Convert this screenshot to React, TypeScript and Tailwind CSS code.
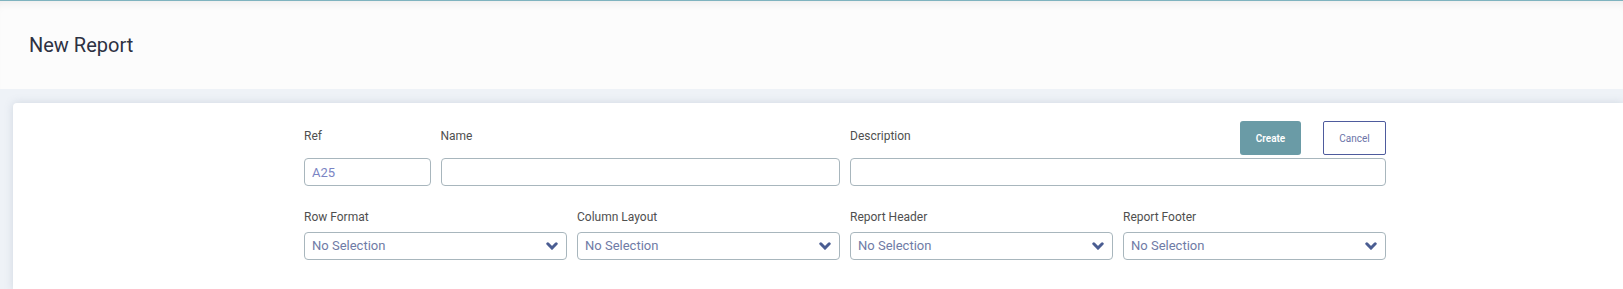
import React from 'react';

const selects = ['Row Format', 'Column Layout', 'Report Header', 'Report Footer'];

function Chevron() {
  return (
    <svg width="12" height="8" viewBox="0 0 12 8" className="text-[#4a5d92]">
      <polyline
        points="1.8,1.8 6,6 10.2,1.8"
        fill="none"
        stroke="currentColor"
        strokeWidth="3"
        strokeLinecap="round"
        strokeLinejoin="miter"
      />
    </svg>
  );
}

function SelectField({ label }: { label: string }) {
  return (
    <div className="col-span-2 flex flex-col">
      <label className="mb-[7px] block h-[16px] text-[12px] leading-[16px] text-[#4f4f4f]">{label}</label>
      <div className="flex h-[28px] items-center justify-between rounded-[4px] border border-[#a8b6bd] bg-white pl-[7px] pr-[8px]">
        <span className="text-[13px] text-[#6f7ba6]">No Selection</span>
        <Chevron />
      </div>
    </div>
  );
}

export default function App() {
  return (
    <div className="min-h-[289px] bg-[#eef2f7] font-['Roboto',sans-serif]">
      <header className="flex h-[89px] items-center border-t border-[#7fb3bf] bg-[#fcfcfc] pl-[29px] shadow-[inset_0_8px_10px_-6px_rgba(0,0,0,0.07)]">
        <h1 className="text-[20px] leading-[28px] text-[#2d3142]">New Report</h1>
      </header>

      <div className="pl-[13px] pt-[14px]">
        <div className="rounded-tl-[4px] bg-white pb-[30px] pl-[291px] pt-[18px] shadow-[0_0_8px_rgba(120,135,160,0.25)]">
          <div className="grid w-[1082px] grid-cols-8 gap-x-[10px]">
            <div className="col-span-1 flex flex-col">
              <label className="block h-[37px] pt-[7px] text-[12px] leading-[16px] text-[#4f4f4f]">Ref</label>
              <input
                defaultValue="A25"
                className="h-[28px] rounded-[4px] border border-[#a8b6bd] bg-white px-[7px] text-[13px] text-[#7a84c4] outline-none"
              />
            </div>
            <div className="col-span-3 flex flex-col">
              <label className="block h-[37px] pt-[7px] text-[12px] leading-[16px] text-[#4f4f4f]">Name</label>
              <input className="h-[28px] rounded-[4px] border border-[#a8b6bd] bg-white px-[7px] text-[13px] outline-none" />
            </div>
            <div className="col-span-4 flex flex-col">
              <div className="flex h-[37px] items-start justify-between">
                <label className="block pt-[7px] text-[12px] leading-[16px] text-[#4f4f4f]">Description</label>
                <div className="flex gap-[22px]">
                  <button
                    type="button"
                    className="h-[34px] w-[61px] rounded-[3px] bg-[#6a9ba6] text-[10px] font-semibold text-white"
                  >
                    Create
                  </button>
                  <button
                    type="button"
                    className="h-[34px] w-[63px] rounded-[2px] border border-[#4e5b9d] bg-white text-[10px] text-[#6b73a8]"
                  >
                    Cancel
                  </button>
                </div>
              </div>
              <input className="h-[28px] rounded-[4px] border border-[#a8b6bd] bg-white px-[7px] text-[13px] outline-none" />
            </div>

            <div className="col-span-8 h-[23px]" />

            {selects.map((s) => (
              <SelectField key={s} label={s} />
            ))}
          </div>
        </div>
      </div>
    </div>
  );
}
